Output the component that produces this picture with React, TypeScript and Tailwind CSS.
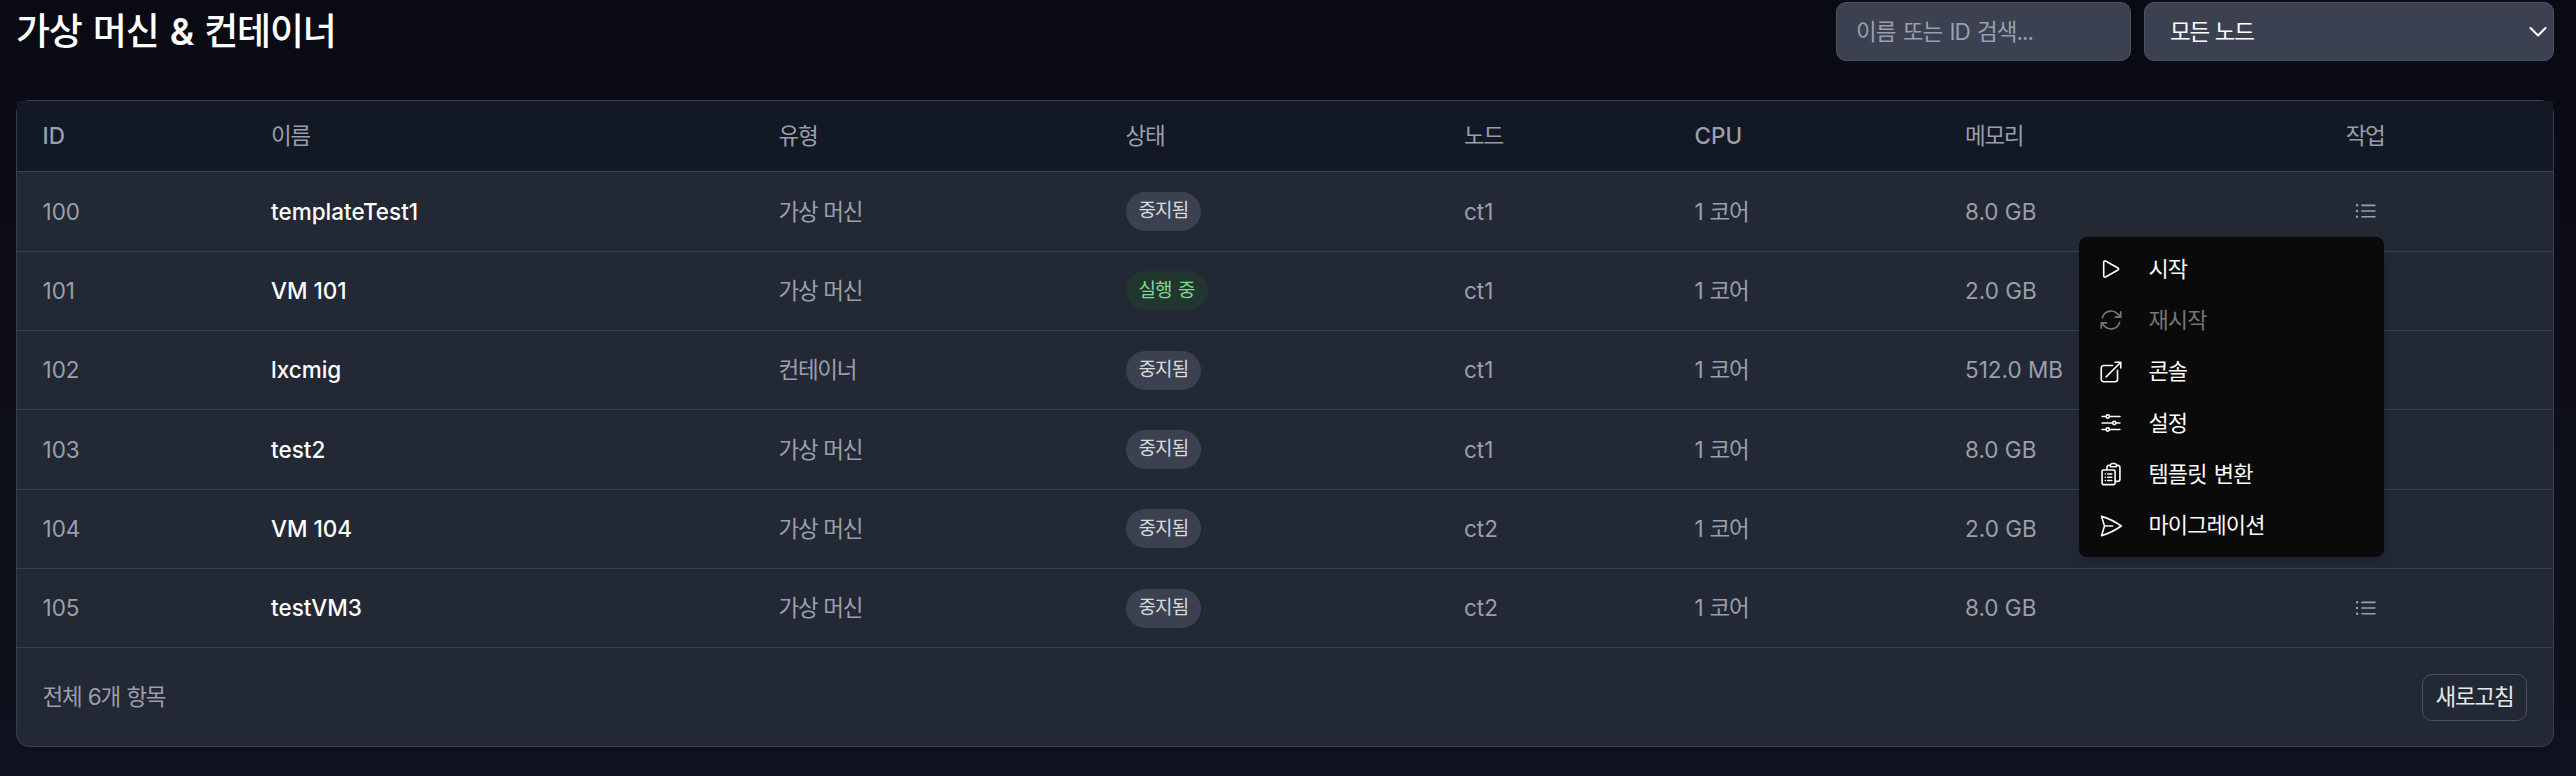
import {
  HiOutlineAdjustmentsHorizontal,
  HiOutlineArrowPath,
  HiOutlineArrowTopRightOnSquare,
  HiOutlineClipboardDocumentList,
  HiOutlineListBullet,
  HiOutlinePaperAirplane,
  HiOutlinePlay,
} from "react-icons/hi2";

const machines = [
  { id: 100, name: "templateTest1", type: "가상 머신", running: false, node: "ct1", cores: 1, memory: "8.0 GB" },
  { id: 101, name: "VM 101", type: "가상 머신", running: true, node: "ct1", cores: 1, memory: "2.0 GB" },
  { id: 102, name: "lxcmig", type: "컨테이너", running: false, node: "ct1", cores: 1, memory: "512.0 MB" },
  { id: 103, name: "test2", type: "가상 머신", running: false, node: "ct1", cores: 1, memory: "8.0 GB" },
  { id: 104, name: "VM 104", type: "가상 머신", running: false, node: "ct2", cores: 1, memory: "2.0 GB" },
  { id: 105, name: "testVM3", type: "가상 머신", running: false, node: "ct2", cores: 1, memory: "8.0 GB" },
];

const menuItems = [
  { label: "시작", icon: HiOutlinePlay },
  { label: "재시작", icon: HiOutlineArrowPath, disabled: true },
  { label: "콘솔", icon: HiOutlineArrowTopRightOnSquare },
  { label: "설정", icon: HiOutlineAdjustmentsHorizontal },
  { label: "템플릿 변환", icon: HiOutlineClipboardDocumentList },
  { label: "마이그레이션", icon: HiOutlinePaperAirplane },
];

const columns = "grid grid-cols-[228.5px_507.5px_347px_338.5px_230.5px_270.5px_613.5px] items-center pl-[25.5px]";

function StatusBadge({ running }: { running: boolean }) {
  return (
    <span
      className={`flex h-[39px] w-fit items-center rounded-full px-[13px] text-[19px] tracking-[-0.9px] [word-spacing:2px] ${
        running ? "bg-[#22352f] text-[#7bdc8e]" : "bg-[#3b4150] text-[#d8dade]"
      }`}
    >
      {running ? "실행 중" : "중지됨"}
    </span>
  );
}

function ActionMenu() {
  return (
    <div className="absolute top-[39px] right-[-5px] z-10 w-[305px] rounded-[8px] bg-[#0a0a0a] py-[6px] shadow-lg">
      {menuItems.map((item) => {
        const Icon = item.icon;
        return (
          <div
            key={item.label}
            className={`flex h-[51.3px] items-center pl-[19px] text-[22px] tracking-[-0.9px] [word-spacing:2px] ${
              item.disabled ? "text-[#757575]" : "text-[#fafafa]"
            }`}
          >
            <Icon className="mr-[25px] size-[26px]" />
            {item.label}
          </div>
        );
      })}
    </div>
  );
}

export default function App() {
  return (
    <div className="h-[776px] w-[2576px] overflow-hidden bg-linear-to-b from-[#0a0a14] to-[#0f121e] pr-[22px] pl-[16px] font-['Inter','Noto_Sans_CJK_KR',sans-serif] text-[22.5px]">
      <div className="flex h-[100px] justify-between pt-[2px]">
        <h1 className="text-[37px] leading-[60px] font-medium tracking-[-1.2px] text-white [word-spacing:2.5px]">
          가상 머신 <span className="font-semibold">&amp;</span> 컨테이너
        </h1>
        <div className="flex gap-[13px]">
          <input
            placeholder="이름 또는 ID 검색..."
            className="h-[59px] w-[295px] rounded-[10px] border border-[#4b5260] bg-[#3b4150] px-[19px] tracking-[-1px] text-white [word-spacing:2px] placeholder:text-[#9a9fab]"
          />
          <button className="flex h-[59px] w-[410px] items-center justify-between rounded-[10px] border border-[#4b5260] bg-[#3b4150] pr-[6px] pl-[25px] tracking-[-1.3px] text-white [word-spacing:1px]">
            모든 노드
            <svg viewBox="0 0 18 12" fill="none" stroke="currentColor" strokeWidth="2" strokeLinecap="round" strokeLinejoin="round" className="h-[12px] w-[18px]">
              <path d="M1.5 2L9 9.5L16.5 2" />
            </svg>
          </button>
        </div>
      </div>

      <div className="h-[647px] w-[2538px] rounded-[13px] border border-[#384050] bg-[#222834]">
        <div className={`${columns} h-[71.3px] border-b border-[#384050] bg-[#121824] tracking-[-1.3px] text-[#9a9fab]`}>
          <div className="font-medium tracking-normal">ID</div>
          <div>이름</div>
          <div>유형</div>
          <div>상태</div>
          <div>노드</div>
          <div className="font-medium tracking-normal">CPU</div>
          <div className="flex justify-between pr-[194px]">
            <span>메모리</span>
            <span>작업</span>
          </div>
        </div>

        {machines.map((m) => (
          <div key={m.id} className={`${columns} h-[79.35px] border-b border-[#384050] text-[#9a9fab]`}>
            <div>{m.id}</div>
            <div className="font-medium text-white">{m.name}</div>
            <div className="tracking-[-1.3px] [word-spacing:1px]">{m.type}</div>
            <StatusBadge running={m.running} />
            <div>{m.node}</div>
            <div className="tracking-[-1.2px] [word-spacing:2px]">{m.cores} 코어</div>
            <div className="flex items-center justify-between pr-[200px]">
              <span>{m.memory}</span>
              <span className="relative">
                <HiOutlineListBullet className="size-[26px]" />
                {m.id === 100 && <ActionMenu />}
              </span>
            </div>
          </div>
        ))}

        <div className="flex h-[98px] items-center justify-between pr-[26px] pl-[25.5px]">
          <p className="tracking-[-1.3px] text-[#9a9fab] [word-spacing:1.5px]">전체 6개 항목</p>
          <button className="h-[47px] w-[105px] rounded-[10px] border border-[#4b5260] tracking-[-1.2px] text-[#e5e7eb]">새로고침</button>
        </div>
      </div>
    </div>
  );
}
